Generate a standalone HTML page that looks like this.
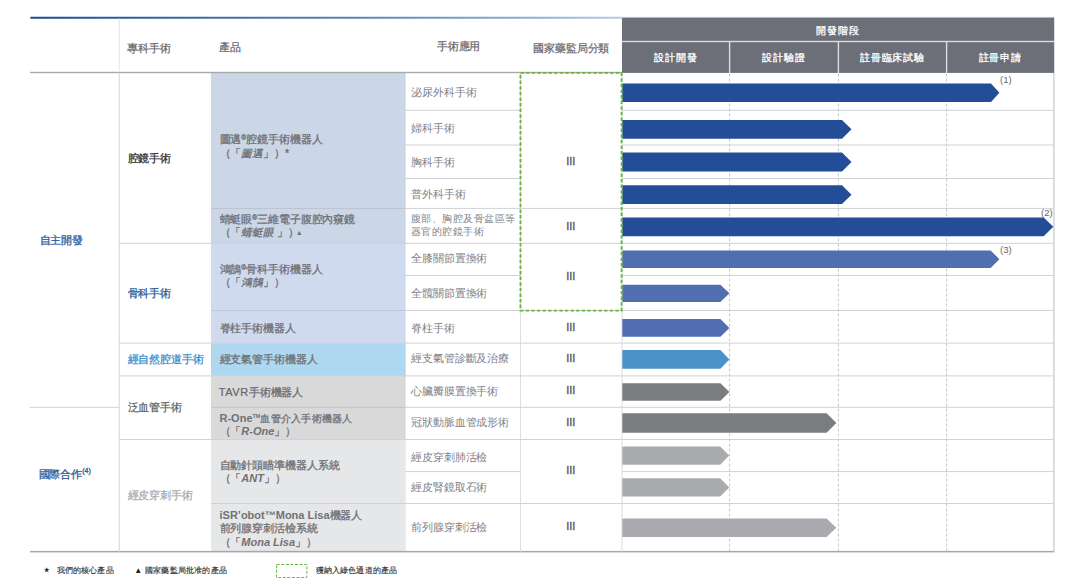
<!DOCTYPE html>
<html><head><meta charset="utf-8"><title>pipeline</title>
<style>
html,body{margin:0;padding:0;background:#fff;}
body{width:1080px;height:581px;position:relative;overflow:hidden;font-family:"Liberation Sans",sans-serif;color:#66676c;}
.a{position:absolute;}
.t{position:absolute;font-size:10.5px;line-height:13.3px;white-space:nowrap;letter-spacing:-0.1px;font-weight:400;-webkit-text-stroke:0.22px currentColor;}
.t span,.t i{line-height:0;}
.hd{color:#fff;font-weight:400;font-size:10px;-webkit-text-stroke:0.3px #fff;text-align:center;letter-spacing:0.75px;}
.b{font-weight:400;-webkit-text-stroke:0.31px currentColor;color:#707176;}
.b .l{font-weight:bold;-webkit-text-stroke:0;}
.c{text-align:center;}
.l{font-size:11px;letter-spacing:0;}
.s{font-size:5.5px;position:relative;top:-3.5px;letter-spacing:0;}
.ap{-webkit-text-stroke:0;color:#808187;letter-spacing:-0.1px;font-size:10.5px;font-weight:400;}
.iii{font-size:11px;letter-spacing:0;color:#55565a;text-align:center;-webkit-text-stroke:0.3px #55565a;margin-left:-0.5px;}
.n{-webkit-text-stroke:0;font-size:9.5px;letter-spacing:0;color:#66676b;}
.f{-webkit-text-stroke:0.15px #333;font-size:7.5px;letter-spacing:0.2px;color:#333;}
</style></head><body>

<svg class="a" style="left:0;top:0" width="1080" height="581" viewBox="0 0 1080 581">
<defs><linearGradient id="tb" x1="0" y1="0" x2="1" y2="0"><stop offset="0" stop-color="#1d4d8d"/><stop offset="0.22" stop-color="#3565a2"/><stop offset="0.55" stop-color="#5a86b8"/><stop offset="0.85" stop-color="#8fb0d3"/><stop offset="1" stop-color="#b5cde3"/></linearGradient></defs>
<rect x="211" y="73" width="194.7" height="170" fill="#cbd6e6"/>
<rect x="211" y="243" width="194.7" height="100.1" fill="#d0daee"/>
<rect x="211" y="343.1" width="194.7" height="32.8" fill="#aed8ef"/>
<rect x="211" y="375.9" width="194.7" height="63.6" fill="#d9d9da"/>
<rect x="211" y="439.5" width="194.7" height="111.5" fill="#e6e7e8"/>
<rect x="622" y="16.8" width="432.2" height="0.9" fill="#d3e0ee"/>
<rect x="622" y="17.6" width="432.2" height="55.3" fill="#6c6e78"/>
<rect x="622" y="40.8" width="432.2" height="1.4" fill="#dcdcdf"/>
<rect x="728.9" y="42" width="1.4" height="31" fill="#dcdcdf"/>
<rect x="837.7" y="42" width="1.4" height="31" fill="#dcdcdf"/>
<rect x="945.9" y="42" width="1.4" height="31" fill="#dcdcdf"/>
<rect x="30.3" y="16.75" width="592" height="2.0" fill="url(#tb)"/>
<rect x="30" y="71.8" width="592" height="1.4" fill="#a8a9ac"/>
<rect x="30" y="550.9" width="1024.5" height="1.5" fill="#a6a7aa"/>
<rect x="118.65" y="18.7" width="1.3" height="53.3" fill="#ececf0"/>
<rect x="118.6" y="73.2" width="1.4" height="478.3" fill="#dfe0e5"/>
<rect x="519.95" y="73" width="1.1" height="478.5" fill="#dedfe2"/>
<rect x="621.45" y="73" width="1.1" height="478.5" fill="#dedfe2"/>
<rect x="1053.25" y="73" width="1.3" height="478.5" fill="#c9cace"/>
<rect x="405" y="109.8" width="115.5" height="1.0" fill="#d1d2d5"/>
<rect x="622" y="109.8" width="431.5" height="1.0" fill="#d1d2d5"/>
<rect x="405" y="144.5" width="115.5" height="1.0" fill="#d1d2d5"/>
<rect x="622" y="144.5" width="431.5" height="1.0" fill="#d1d2d5"/>
<rect x="405" y="178.0" width="115.5" height="1.0" fill="#d1d2d5"/>
<rect x="622" y="178.0" width="431.5" height="1.0" fill="#d1d2d5"/>
<rect x="211" y="207.9" width="194" height="1.0" fill="#bcc3ce"/>
<rect x="405" y="207.9" width="648.5" height="1.0" fill="#d1d2d5"/>
<rect x="119" y="242.8" width="934.5" height="1.0" fill="#d1d2d5"/>
<rect x="405" y="275.0" width="115.5" height="1.0" fill="#d1d2d5"/>
<rect x="622" y="275.0" width="431.5" height="1.0" fill="#d1d2d5"/>
<rect x="211" y="310.0" width="194" height="1.0" fill="#c0c7d6"/>
<rect x="405" y="310.0" width="648.5" height="1.0" fill="#d1d2d5"/>
<rect x="119" y="342.6" width="934.5" height="1.0" fill="#d1d2d5"/>
<rect x="119" y="375.4" width="934.5" height="1.0" fill="#d1d2d5"/>
<rect x="30" y="406.8" width="89" height="1.0" fill="#d1d2d5"/>
<rect x="211" y="406.9" width="194" height="1.0" fill="#c6c6c8"/>
<rect x="405" y="406.8" width="648.5" height="1.0" fill="#d1d2d5"/>
<rect x="119" y="439.0" width="934.5" height="1.0" fill="#d1d2d5"/>
<rect x="405" y="471.1" width="115.5" height="1.0" fill="#d1d2d5"/>
<rect x="622" y="471.1" width="431.5" height="1.0" fill="#d1d2d5"/>
<rect x="211" y="503.0" width="194" height="1.0" fill="#cfd0d2"/>
<rect x="405" y="503.0" width="648.5" height="1.0" fill="#d1d2d5"/>
<line x1="729.6" y1="73.5" x2="729.6" y2="551" stroke="#c6c7ca" stroke-width="1" stroke-dasharray="3 2"/>
<line x1="838.4" y1="73.5" x2="838.4" y2="551" stroke="#c6c7ca" stroke-width="1" stroke-dasharray="3 2"/>
<line x1="946.6" y1="73.5" x2="946.6" y2="551" stroke="#c6c7ca" stroke-width="1" stroke-dasharray="3 2"/>
<polygon points="622.3,83.5 991,83.5 999.4,92.75 991,102 622.3,102" fill="#244d98"/>
<polygon points="622.3,119.9 842,119.9 851.5,129.3 842,138.7 622.3,138.7" fill="#244d98"/>
<polygon points="622.3,152.5 842,152.5 851.5,162.0 842,171.5 622.3,171.5" fill="#244d98"/>
<polygon points="622.3,185.3 842,185.3 851.5,194.65 842,204 622.3,204" fill="#244d98"/>
<polygon points="622.3,217.4 1043.7,217.4 1053.3,226.85000000000002 1043.7,236.3 622.3,236.3" fill="#244d98"/>
<polygon points="622.3,250.4 990.6,250.4 999.4,259.25 990.6,268.1 622.3,268.1" fill="#506eb0"/>
<polygon points="622.3,284.7 720.4,284.7 729.4,293.35 720.4,302 622.3,302" fill="#506eb0"/>
<polygon points="622.3,319.1 720.4,319.1 729.4,327.9 720.4,336.7 622.3,336.7" fill="#506eb0"/>
<polygon points="622.3,350.1 720.4,350.1 729.4,359.4 720.4,368.7 622.3,368.7" fill="#4a92c8"/>
<polygon points="622.3,383.2 720.4,383.2 729.4,391.95 720.4,400.7 622.3,400.7" fill="#7b7c80"/>
<polygon points="622.3,413.3 826.6,413.3 836.4,423.05 826.6,432.8 622.3,432.8" fill="#7b7c80"/>
<polygon points="622.3,446.4 720.2,446.4 729.3,455.6 720.2,464.8 622.3,464.8" fill="#a9abae"/>
<polygon points="622.3,478.2 720.2,478.2 729.3,487.4 720.2,496.6 622.3,496.6" fill="#a9abae"/>
<polygon points="622.3,518.5 826.6,518.5 836.3,527.8 826.6,537.1 622.3,537.1" fill="#a9abae"/>
<rect x="520.5" y="72.9" width="101.10000000000002" height="237.70000000000002" fill="none" stroke="#64b73c" stroke-width="1.9" stroke-dasharray="3.5 2.1"/>
<rect x="276.6" y="564.5" width="30.3" height="13" fill="none" stroke="#6cb944" stroke-width="1" stroke-dasharray="3 1.6"/>
</svg>
<div class="t " style="left:127.1px;top:41.55px;">專科手術</div>
<div class="t " style="left:219px;top:41.35px;">產品</div>
<div class="t " style="left:436.8px;top:40.05px;">手術應用</div>
<div class="t c" style="left:520.5px;top:41.85px;width:101.5px;letter-spacing:-0.1px">國家藥監局分類</div>
<div class="t hd" style="left:622px;top:23.65px;width:431.5px">開發階段</div>
<div class="t hd" style="left:622px;top:51.45px;width:107.60000000000002px">設計開發</div>
<div class="t hd" style="left:729.6px;top:51.45px;width:108.79999999999995px">設計驗證</div>
<div class="t hd" style="left:838.4px;top:51.45px;width:108.20000000000005px">註冊臨床試驗</div>
<div class="t hd" style="left:946.6px;top:51.45px;width:106.89999999999998px">註冊申請</div>
<div class="t b" style="left:39.5px;top:234.35px;color:#2b60a0">自主開發</div>
<div class="t b" style="left:38.6px;top:468.35px;color:#2d5f9b">國際合作<span class="s" style="font-size:7px;top:-5px">(4)</span></div>
<div class="t b" style="left:127.5px;top:151.95px;color:#333438">腔鏡手術</div>
<div class="t b" style="left:127.5px;top:286.85px;color:#2b60a0">骨科手術</div>
<div class="t b" style="left:127.5px;top:352.85px;color:#3f8fcb">經自然腔道手術</div>
<div class="t " style="left:127.5px;top:400.85px;color:#5e5f64">泛血管手術</div>
<div class="t " style="left:127.5px;top:489.35px;color:#a6a8ac">經皮穿刺手術</div>
<div class="t b" style="left:219.5px;top:133.25px;">圖邁<span class="s" style="font-size:6.5px">®</span>腔鏡手術機器人<br>（「<i>圖邁</i>」）*</div>
<div class="t b" style="left:219.5px;top:213.05px;">蜻蜓眼<span class="s" style="font-size:6.5px">®</span>三維電子腹腔內窺鏡<br>（「<i>蜻蜓眼</i> 」）<span style="font-size:7px;margin-left:-3px;position:relative;top:-1.8px;-webkit-text-stroke:0">▲</span></div>
<div class="t b" style="left:219.5px;top:263.15px;">鴻鵠<span class="s" style="font-size:6.5px">®</span>骨科手術機器人<br>（「<i>鴻鵠</i>」）</div>
<div class="t b" style="left:219.5px;top:321.85px;">脊柱手術機器人</div>
<div class="t b" style="left:219.5px;top:352.85px;">經支氣管手術機器人</div>
<div class="t " style="left:218.7px;top:386.35px;"><span class="l" style="letter-spacing:0.6px">TAVR</span>手術機器人</div>
<div class="t b" style="left:219.5px;top:411.75px;"><span class="l">R-One</span><span class="s" style="font-size:5.5px;top:-3.6px;font-weight:bold;-webkit-text-stroke:0">TM</span><span style="font-size:10px;letter-spacing:0.25px">血管介入手術機器人</span><br>（「<i class="l">R-One</i>」）</div>
<div class="t b" style="left:219.5px;top:459.15px;">自動針頭瞄準機器人系統<br>（「<i class="l">ANT</i>」）</div>
<div class="t b" style="left:219.5px;top:509.05px;"><span class="l">iSR’obot™Mona Lisa</span>機器人<br>前列腺穿刺活檢系統<br>（「<i class="l">Mona Lisa</i>」）</div>
<div class="t ap" style="left:411px;top:86.15px;">泌尿外科手術</div>
<div class="t ap" style="left:411px;top:122.05px;">婦科手術</div>
<div class="t ap" style="left:411px;top:155.55px;">胸科手術</div>
<div class="t ap" style="left:411px;top:187.65px;">普外科手術</div>
<div class="t ap" style="left:411px;top:212.25px;line-height:13px;font-size:10px;letter-spacing:0.45px">腹部、胸腔及骨盆區等<br>器官的腔鏡手術</div>
<div class="t ap" style="left:411px;top:252.35px;">全膝關節置換術</div>
<div class="t ap" style="left:411px;top:287.35px;">全髖關節置換術</div>
<div class="t ap" style="left:411px;top:321.85px;">脊柱手術</div>
<div class="t ap" style="left:411px;top:352.35px;">經支氣管診斷及治療</div>
<div class="t ap" style="left:411px;top:385.35px;">心臟瓣膜置換手術</div>
<div class="t ap" style="left:411px;top:416.35px;">冠狀動脈血管成形術</div>
<div class="t ap" style="left:411px;top:451.35px;">經皮穿刺肺活檢</div>
<div class="t ap" style="left:411px;top:480.85px;">經皮腎鏡取石術</div>
<div class="t ap" style="left:411px;top:520.85px;">前列腺穿刺活檢</div>
<div class="t iii" style="left:520.5px;top:155.35px;width:101.5px">III</div>
<div class="t iii" style="left:520.5px;top:219.85px;width:101.5px">III</div>
<div class="t iii" style="left:520.5px;top:269.85px;width:101.5px">III</div>
<div class="t iii" style="left:520.5px;top:320.85px;width:101.5px">III</div>
<div class="t iii" style="left:520.5px;top:351.85px;width:101.5px">III</div>
<div class="t iii" style="left:520.5px;top:384.35px;width:101.5px">III</div>
<div class="t iii" style="left:520.5px;top:415.85px;width:101.5px">III</div>
<div class="t iii" style="left:520.5px;top:463.85px;width:101.5px">III</div>
<div class="t iii" style="left:520.5px;top:520.35px;width:101.5px">III</div>
<div class="t n" style="left:1000px;top:73.45px;">(1)</div>
<div class="t n" style="left:1041px;top:205.95px;">(2)</div>
<div class="t n" style="left:1000px;top:243.25px;">(3)</div>
<div class="t " style="left:44px;top:563.85px;font-size:6px;color:#222">★</div>
<div class="t f" style="left:56.5px;top:563.85px;">我們的核心產品</div>
<div class="t " style="left:134.3px;top:564.15px;font-size:8px;color:#222;-webkit-text-stroke:0">▲</div>
<div class="t f" style="left:145px;top:563.85px;">國家藥監局批准的產品</div>
<div class="t f" style="left:315.5px;top:563.85px;">獲納入綠色通道的產品</div>
</body></html>
